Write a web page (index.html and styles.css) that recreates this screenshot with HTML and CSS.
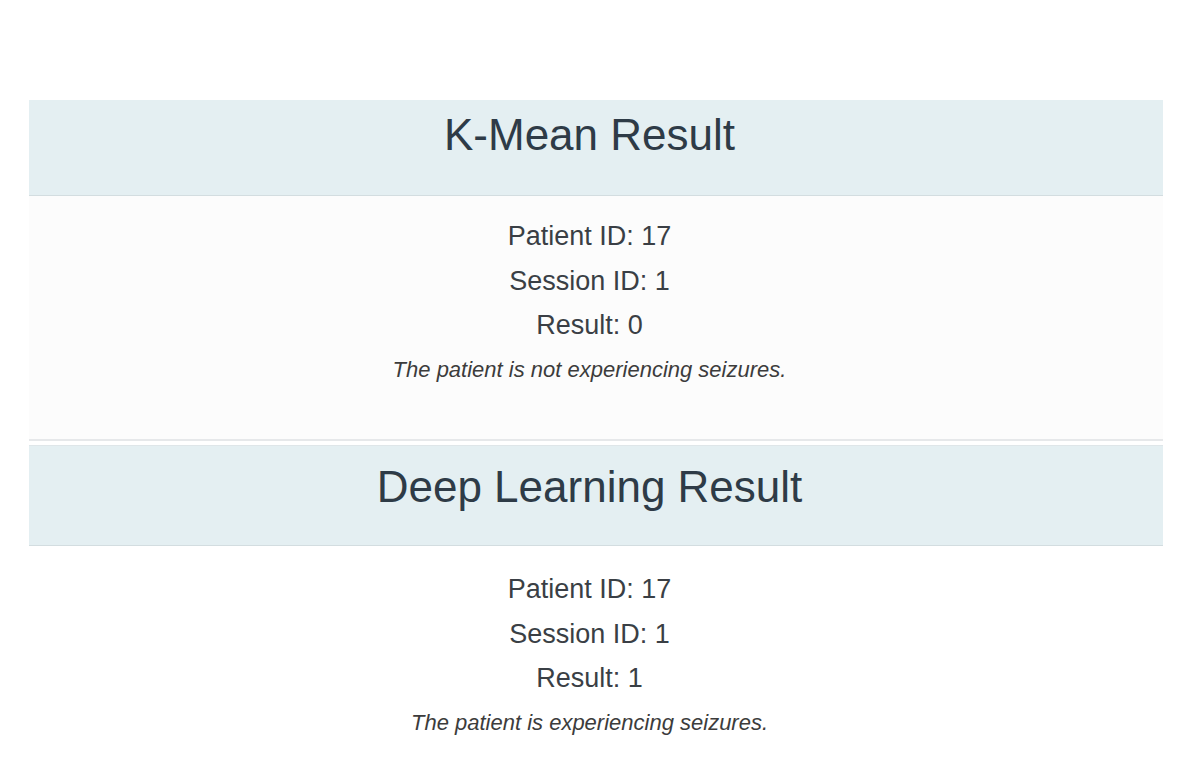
FILE: index.html
```html
<!DOCTYPE HTML>
<html>
<head>
<meta charset="utf-8" />
<title>Results</title>
<link rel="stylesheet" href="styles.css">
</head>
<body>
<div id="wrap">
	<div class="panel panel_km">
		<div class="panel_head"><h2>K-Mean Result</h2></div>
		<div class="panel_body">
			<p>Patient ID: 17</p>
			<p>Session ID: 1</p>
			<p>Result: 0</p>
			<p class="note">The patient is not experiencing seizures.</p>
		</div>
	</div>
	<div class="panel panel_dl">
		<div class="panel_head"><h2>Deep Learning Result</h2></div>
		<div class="panel_body">
			<p>Patient ID: 17</p>
			<p>Session ID: 1</p>
			<p>Result: 1</p>
			<p class="note">The patient is experiencing seizures.</p>
		</div>
	</div>
</div>
</body>
</html>
```

FILE: styles.css
```css
*{ padding:0; margin:0; border:0; }
body{ background:#fff; font-family:"Liberation Sans", Arial, Helvetica, sans-serif; color:#3a3f45; }
#wrap{ padding:100px 39px 0 29px; }

.panel .panel_head{ background:#e4eff2; border-bottom:1px solid #d3dde0; text-align:center; }
.panel .panel_head h2{ font-size:44px; font-weight:normal; line-height:51px; color:#2e3b47; }
.panel .panel_body{ padding-right:13px; text-align:center; }
.panel .panel_body p{ font-size:27px; line-height:44.5px; }
.panel .panel_body p.note{ font-size:22px; font-style:italic; color:#3c3c3c; }

.panel_km .panel_head{ padding:9px 13px 35px 0; }
.panel_km .panel_body{ background:#fcfcfc; padding-top:18px; padding-bottom:47px; border-bottom:2px solid #e6e8ea; }

.panel_dl{ margin-top:4px; border-top:1px solid #dfe6e9; }
.panel_dl .panel_head{ padding:15px 13px 33px 0; }
.panel_dl .panel_body{ padding-top:21px; padding-bottom:30px; }
```
